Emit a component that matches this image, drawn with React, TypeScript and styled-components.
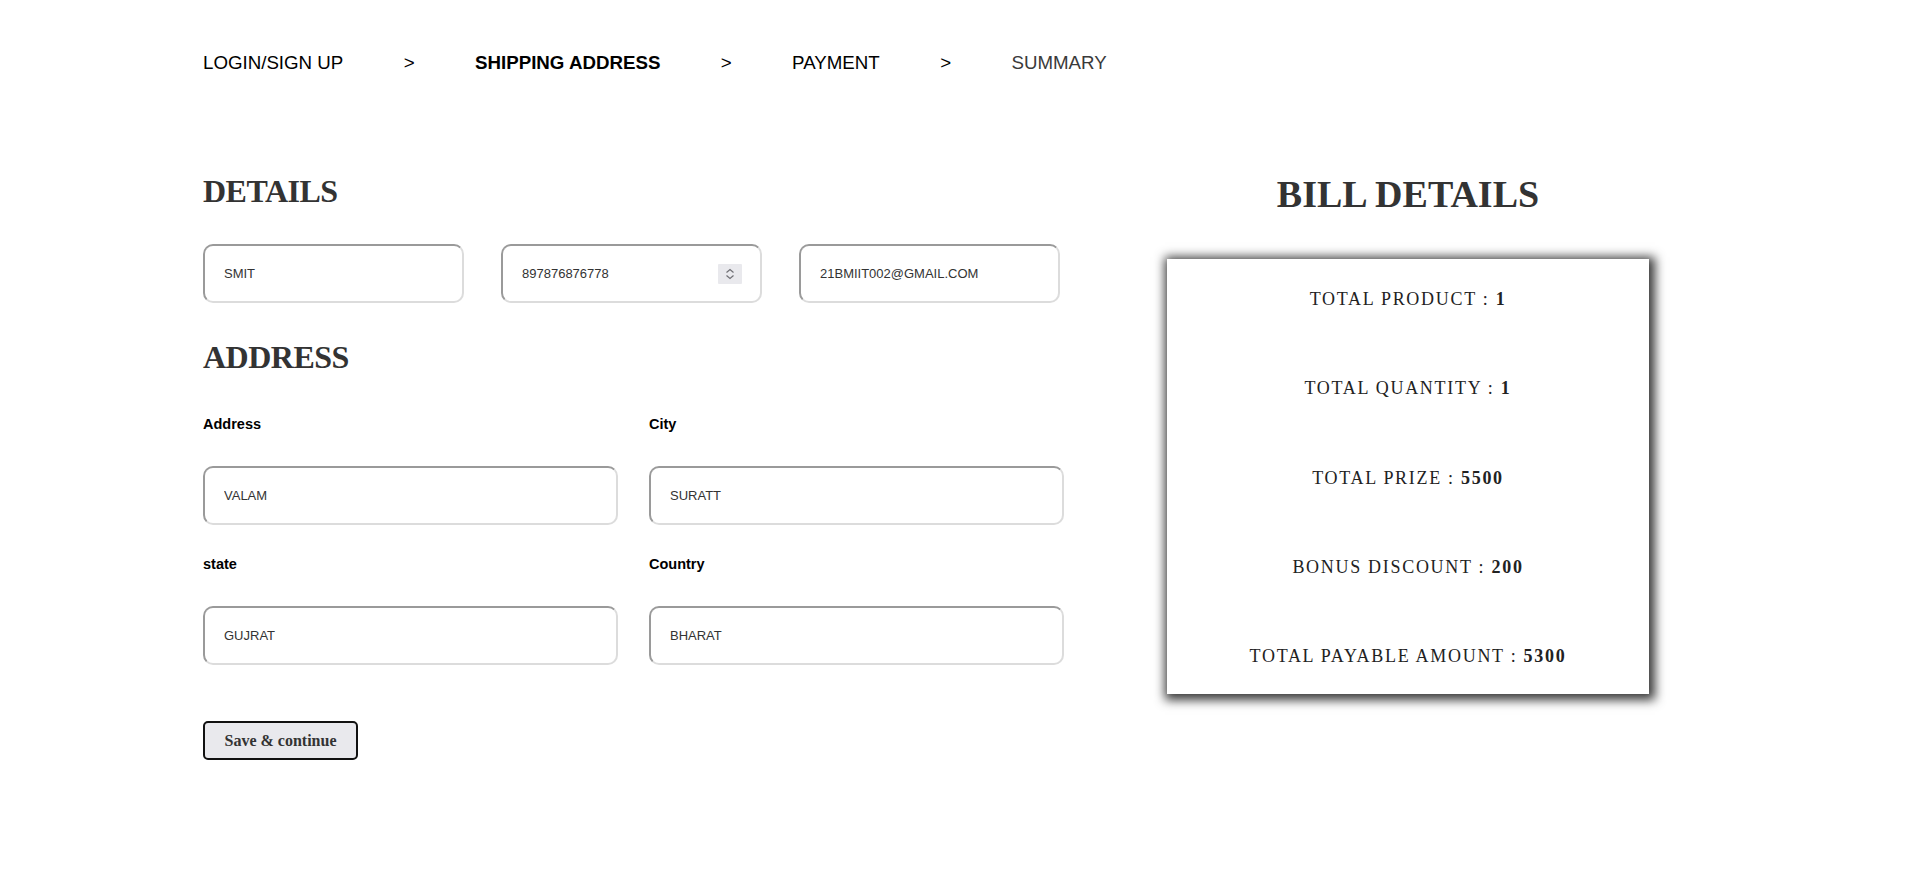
import React from "react";
import styled, { createGlobalStyle } from "styled-components";

const GlobalStyle = createGlobalStyle`
  html, body {
    margin: 0;
    padding: 0;
    background: #ffffff;
  }
  body {
    font-family: "Liberation Sans", Arial, sans-serif;
  }
  * {
    box-sizing: border-box;
  }
`;

const Page = styled.div`
  padding: 52px 0 80px 203px;
`;

const Steps = styled.nav`
  display: flex;
  align-items: center;
  gap: 60.4px;
  height: 22px;
`;

const Step = styled.span<{ $active?: boolean; $muted?: boolean }>`
  font-family: "Liberation Sans", Arial, sans-serif;
  font-size: 18.72px;
  line-height: 22px;
  font-weight: ${(p) => (p.$active ? 700 : 400)};
  color: ${(p) => (p.$muted ? "#3a3a3a" : "#000000")};
  white-space: nowrap;
`;

const Main = styled.main`
  display: flex;
  align-items: flex-start;
  gap: 104px;
  margin-top: 101px;
`;

const FormColumn = styled.section`
  width: 860px;
  display: flex;
  flex-direction: column;
  align-items: flex-start;
`;

const SectionTitle = styled.h2<{ $gapTop?: number }>`
  margin: ${(p) => p.$gapTop ?? 0}px 0 0;
  font-family: "Liberation Serif", "Times New Roman", serif;
  font-weight: 700;
  font-size: 32px;
  line-height: 32px;
  letter-spacing: -0.5px;
  color: #333333;
`;

const ContactRow = styled.div`
  display: grid;
  grid-template-columns: repeat(3, 261px);
  column-gap: 37px;
  margin-top: 37px;
`;

const AddressGrid = styled.div`
  display: grid;
  grid-template-columns: repeat(2, 415px);
  column-gap: 31px;
  row-gap: 31px;
  margin-top: 43px;
`;

const Field = styled.label`
  display: flex;
  flex-direction: column;
`;

const FieldLabel = styled.span`
  font-family: "Liberation Sans", Arial, sans-serif;
  font-weight: 700;
  font-size: 14.5px;
  line-height: 17px;
  color: #000000;
  margin-bottom: 33px;
`;

const InputBox = styled.div`
  display: flex;
  align-items: center;
  height: 59px;
  border-style: solid;
  border-width: 2px;
  border-color: #9a9a9a #dcdcdc #dcdcdc #9a9a9a;
  border-radius: 10px;
  background: #ffffff;
`;

const TextInput = styled.input`
  flex: 1;
  min-width: 0;
  height: 100%;
  border: none;
  outline: none;
  background: transparent;
  padding: 0 18px 0 19px;
  font-family: "Liberation Sans", Arial, sans-serif;
  font-size: 13px;
  color: #333333;
`;

const Spinner = styled.span`
  flex: none;
  width: 24px;
  height: 20px;
  margin-right: 18px;
  background: #e9e9ed;
  border-radius: 1px;
  display: flex;
  align-items: center;
  justify-content: center;
`;

const SaveButton = styled.button`
  margin-top: 56px;
  width: 155px;
  height: 39px;
  padding: 0;
  border: 2px solid #111111;
  border-radius: 5px;
  background: #e9e9ed;
  font-family: "Liberation Serif", "Times New Roman", serif;
  font-weight: 700;
  font-size: 16px;
  color: #333333;
  cursor: pointer;
`;

const BillColumn = styled.aside`
  width: 482px;
  display: flex;
  flex-direction: column;
  align-items: center;
`;

const BillTitle = styled.h1`
  margin: 0;
  font-family: "Liberation Serif", "Times New Roman", serif;
  font-weight: 700;
  font-size: 38px;
  line-height: 38px;
  letter-spacing: 0;
  color: #333333;
`;

const BillCard = styled.div`
  align-self: stretch;
  margin-top: 46px;
  height: 435px;
  background: #ffffff;
  box-shadow: 2px 2px 10px 4px rgba(0, 0, 0, 0.78);
  padding: 29px 0 26px;
  display: flex;
  flex-direction: column;
  gap: 67.25px;
`;

const BillRow = styled.p`
  margin: 0;
  font-family: "Liberation Serif", "Times New Roman", serif;
  font-size: 18px;
  line-height: 22px;
  letter-spacing: 1.7px;
  color: #222222;
  text-align: center;
`;

const BillValue = styled.b`
  font-weight: 700;
`;

const SpinIcon = () => (
  <svg width="24" height="20" viewBox="0 0 24 20" fill="none">
    <path d="M8.5 8.5 L12 5.5 L15.5 8.5" stroke="#6f6f74" strokeWidth="1.2" />
    <path d="M8.5 11.5 L12 14.5 L15.5 11.5" stroke="#6f6f74" strokeWidth="1.2" />
  </svg>
);

const steps = [
  { label: "LOGIN/SIGN UP" },
  { label: "SHIPPING ADDRESS", active: true },
  { label: "PAYMENT" },
  { label: "SUMMARY", muted: true },
];

const addressFields = [
  { label: "Address", value: "VALAM" },
  { label: "City", value: "SURATT" },
  { label: "state", value: "GUJRAT" },
  { label: "Country", value: "BHARAT" },
];

const bill = [
  { label: "TOTAL PRODUCT", value: "1" },
  { label: "TOTAL QUANTITY", value: "1" },
  { label: "TOTAL PRIZE", value: "5500" },
  { label: "BONUS DISCOUNT", value: "200" },
  { label: "TOTAL PAYABLE AMOUNT", value: "5300" },
];

export default function App() {
  return (
    <>
      <GlobalStyle />
      <Page>
        <Steps>
          {steps.map((s, i) => (
            <React.Fragment key={s.label}>
              {i > 0 && <Step>&gt;</Step>}
              <Step $active={s.active} $muted={s.muted}>
                {s.label}
              </Step>
            </React.Fragment>
          ))}
        </Steps>

        <Main>
          <FormColumn>
            <SectionTitle>DETAILS</SectionTitle>
            <ContactRow>
              <InputBox>
                <TextInput defaultValue="SMIT" />
              </InputBox>
              <InputBox>
                <TextInput defaultValue="897876876778" />
                <Spinner>
                  <SpinIcon />
                </Spinner>
              </InputBox>
              <InputBox>
                <TextInput defaultValue="21BMIIT002@GMAIL.COM" />
              </InputBox>
            </ContactRow>

            <SectionTitle $gapTop={38}>ADDRESS</SectionTitle>
            <AddressGrid>
              {addressFields.map((f) => (
                <Field key={f.label}>
                  <FieldLabel>{f.label}</FieldLabel>
                  <InputBox>
                    <TextInput defaultValue={f.value} />
                  </InputBox>
                </Field>
              ))}
            </AddressGrid>

            <SaveButton type="button">Save &amp; continue</SaveButton>
          </FormColumn>

          <BillColumn>
            <BillTitle>BILL DETAILS</BillTitle>
            <BillCard>
              {bill.map((b) => (
                <BillRow key={b.label}>
                  {b.label} : <BillValue>{b.value}</BillValue>
                </BillRow>
              ))}
            </BillCard>
          </BillColumn>
        </Main>
      </Page>
    </>
  );
}
